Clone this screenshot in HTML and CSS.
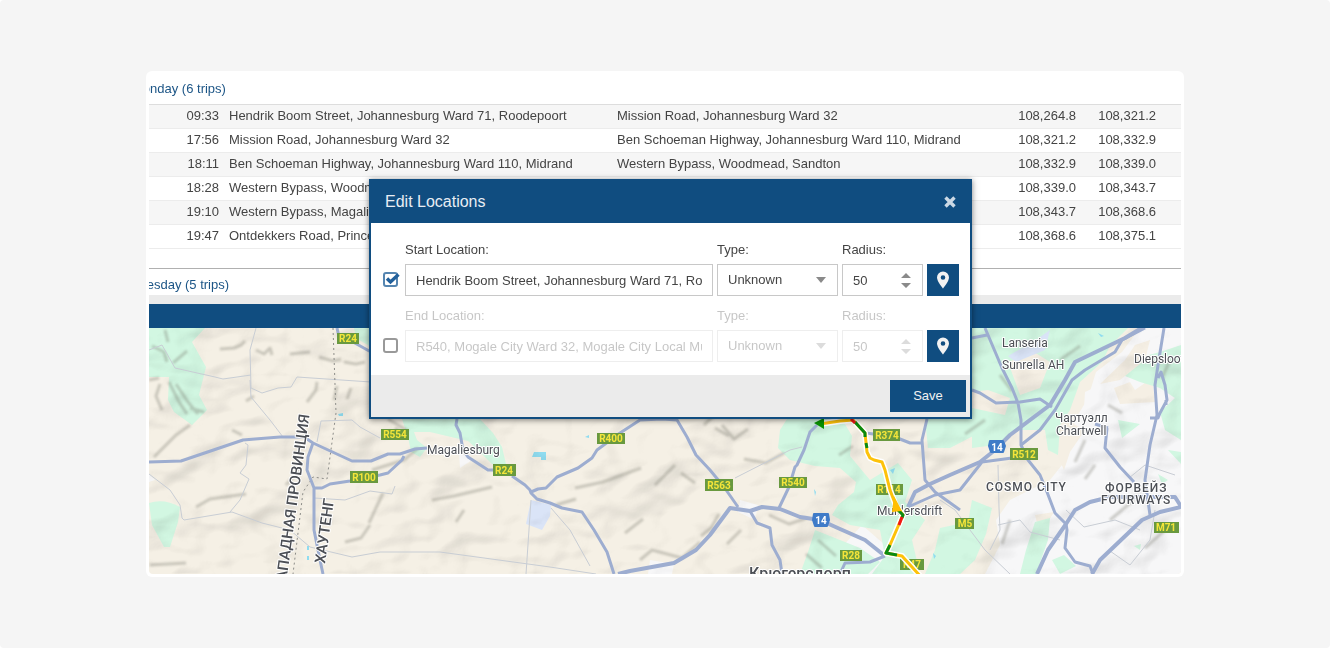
FILE: index.html
```html
<!DOCTYPE html>
<html lang="en">
<head>
<meta charset="utf-8">
<meta name="viewport" content="width=device-width, initial-scale=1">
<title>Edit Locations</title>
<link rel="stylesheet" href="styles.css">
</head>
<body>
<main class="page">
  <div class="card">
    <section class="report">
      <h2 class="day">Monday (6 trips)</h2>
      <table class="trips">
        <colgroup><col class="col-time"><col class="col-from"><col class="col-to"><col class="col-odo"><col class="col-odo"><col class="col-end"></colgroup>
        <tbody>
          <tr><td class="num">09:33</td><td>Hendrik Boom Street, Johannesburg Ward 71, Roodepoort</td><td>Mission Road, Johannesburg Ward 32</td><td class="num">108,264.8</td><td class="num">108,321.2</td><td></td></tr>
          <tr><td class="num">17:56</td><td>Mission Road, Johannesburg Ward 32</td><td>Ben Schoeman Highway, Johannesburg Ward 110, Midrand</td><td class="num">108,321.2</td><td class="num">108,332.9</td><td></td></tr>
          <tr><td class="num">18:11</td><td>Ben Schoeman Highway, Johannesburg Ward 110, Midrand</td><td>Western Bypass, Woodmead, Sandton</td><td class="num">108,332.9</td><td class="num">108,339.0</td><td></td></tr>
          <tr><td class="num">18:28</td><td>Western Bypass, Woodmead, Sandton</td><td></td><td class="num">108,339.0</td><td class="num">108,343.7</td><td></td></tr>
          <tr><td class="num">19:10</td><td>Western Bypass, Magaliessig, Sandton</td><td></td><td class="num">108,343.7</td><td class="num">108,368.6</td><td></td></tr>
          <tr><td class="num">19:47</td><td>Ontdekkers Road, Princess, Roodepoort</td><td></td><td class="num">108,368.6</td><td class="num">108,375.1</td><td></td></tr>
        </tbody>
      </table>
      <h2 class="day day-next">Tuesday (5 trips)</h2>
    </section>
    <div class="splitter"></div>
    <div class="map-bar"></div>
    <svg class="map" viewBox="149 328 1032 246" preserveAspectRatio="xMidYMid slice" role="img" aria-label="Trip map">
      <defs>
        <filter id="relief" x="0" y="0" width="100%" height="100%" color-interpolation-filters="sRGB">
          <feTurbulence type="fractalNoise" baseFrequency="0.014 0.020" numOctaves="3" seed="11"/>
          <feDiffuseLighting surfaceScale="14" diffuseConstant="1.12" lighting-color="#ffffff"><feDistantLight azimuth="225" elevation="62"/></feDiffuseLighting>
        </filter>
        <filter id="soft" x="-10%" y="-10%" width="120%" height="120%"><feGaussianBlur stdDeviation="1.2"/></filter>
      </defs>
      <rect x="149" y="328" width="1032" height="246" fill="#f5f0e5"/>
      <path class="urban" d="M1181 328H1140L1122 352L1096 372L1088 398L1075 420L1066 460L1050 480L1010 500L996 520L1000 545L985 574H1181z"/>
      <path class="urban" d="M1085 392L1098 386L1100 402L1084 408zM740 500L758 505L755 520L738 512zM862 525L885 545L880 574H800L830 560zM459 452L472 460L460 468zM650 560L674 564L672 574H648zM149 474L155 480L149 482z"/>
      <path class="sand" d="M1114 388L1130 382L1135 390L1152 378L1155 402L1120 404zM1066 420L1085 430L1070 452L1064 470L1055 450zM985 490L1000 500L990 530L975 545zM1035 515L1054 512L1040 535z"/>
      <g class="green">
        <path d="M149 328H205L192 342L206 367L199 395L207 410L192 425L174 412L168 400L169 377H149z"/>
        <path d="M149 503Q164 498 180 507L178 522L170 547H164L152 525z"/>
        <path d="M354 328H371V347L356 338z"/>
        <path d="M402 419H480L493 433L502 447L506 464H492L478 450L468 441L430 432H414L417 440L427 448L420 457L411 452L408 437z"/>
        <path d="M787 419H842L852 436L850 456L870 480L898 463L912 480L905 502L925 520L912 540L920 574H872L885 556L880 530L850 525L832 515L838 505L854 492L856 482L840 468L815 466L790 460L778 448L780 430z"/>
        <path d="M815 530L835 538L860 548L880 562L868 574H800L808 552z"/>
        <path d="M972 328H1128L1110 346L1102 362L1080 382L1070 410L1060 425L1058 455L1048 450L1045 430L1020 430L995 445L972 448z"/>
        <path d="M925 419H972L975 435L950 448L928 448z"/>
        <path d="M1130 360L1160 352L1181 345V440L1165 430L1160 412L1175 398L1160 388L1140 382L1120 374z"/>
        <path d="M940 528L968 522L972 500L992 508L986 534L975 560L960 574H925L935 550z"/>
        <path d="M1035 522L1050 518L1048 540L1036 574H1020L1026 550zM1052 560L1064 555L1076 566L1060 574zM1118 420L1140 424L1122 438zM1168 450L1181 452V464zM1158 474L1168 480L1162 484zM1134 546L1141 544L1140 550z"/>
      </g>
      <path class="sand" d="M972 392L988 390L1010 398L1005 415L972 408zM1008 362L1034 352L1050 362L1040 388L1020 395zM1100 384L1125 360L1135 345L1150 340L1145 360L1120 380z"/>
      <path d="M531 500L551 505L550 516L542 530L526 524zM1008 356L1036 340L1050 330L1045 350L1016 362z" fill="#dae4f7"/>
      <path class="water" d="M534 452H546V460H541V457H532zM585 437L589 435V438zM338 414L343 413V416L339 416zM890 470L895 468L893 474zM1098 333L1104 336L1101 337zM307 546h2v4h-2zM307 556h2v4h-2zM933 553l3 3l-2 3zM814 489l2 3l-1 4z"/>
      <rect class="relief" x="149" y="328" width="1032" height="246" filter="url(#relief)"/>
      <g class="ridges" filter="url(#soft)">
        <path d="M220 349l14-1 7-3 4-4M256 350l8 4 6-6 2 7M290 354l20-2M319 357l14 4 8-2M344 362l12 2 9-2M307 402l9-12 1-8M334 400l3-14M347 399l4-11M246 401l8-5"/>
        <path d="M152 346l12 6 3 10M165 330l3 12M173 363l14-12M149 380l10-2M169 382l10 20 8 12M176 384l12 18 10 12M190 408l14 4M160 384l-4 12 6 14"/>
        <path d="M388 419l20 12M395 428l12 9M300 470l-14 15M370 525l-9 13-16 4M383 493l-14 30M372 470l32-10 14-12M432 500l22-4 38-9M456 522l8-12M575 488l28-6 38-14M556 505l20-6M625 533l18-14M655 485l20-20M681 473l14 10M716 413l-12 12M715 428l14 8"/>
        <path d="M640 560l12-10 30 8 18-16M701 536l10-8 8-14M727 544l14-14M722 425l12 14 14-10M744 459l22 4 18-10M839 455l14-9M769 515l20 9 18-6M818 540l18 16M806 554l16 14M196 507l14-8 36-5M150 565l36-2M190 425l-14 10-22 22M232 430l10 5"/>
        <path d="M1000 375l12 16M1060 360l20-14M1085 440l-10 22M1095 465l-10 14M1110 520l24-20M1145 548l20-18M1010 520l-8 24M985 420l-20 14M1108 405l14 8M1170 360l-8 18"/>
      </g>
      <g class="minor">
        <path d="M256 328L250 350L251 388L262 393L278 388L291 387L297 377L371 382M149 350L162 345L175 368L215 377L223 379L251 375M250 380L251 397L270 420L283 437M149 474L170 490L180 505L182 518L184 520L220 514L232 512L262 523L290 530L310 547L352 557L380 552L440 552L550 567L596 574M245 443L248 445L246 465L240 473L249 479L240 500L230 512M317 442L321 421L352 420L360 427L380 438M314 498L345 500L370 491L392 494L395 486"/>
        <path d="M531 500L526 574M551 508L570 530L590 566M735 478L790 450L802 447M998 465L999 508L1000 530L990 550M998 525L1020 520L1030 532L1060 540M1066 510L1084 527L1115 520L1140 530M1110 551L1130 565L1150 540L1155 510M1129 478L1145 465L1175 475M940 500L955 510L985 550L1010 574"/>
      </g>
      <path class="border" d="M333 328L336 413L327 479L313 477L303 492L293 574"/>
      <g class="road">
        <path d="M149 462L181 461L243 440L255 439L280 437H304L313 443L352 461H371L388 454H400L415 449L427 448M404 456L402 460L388 473L380 475L350 481L330 484L322 488H314L307 470L308 457L313 443M314 488V530L320 560L323 574M337 328L339 337M353 342L371 352"/>
        <path d="M457 419L456 425L460 433L463 450L468 457L488 470H497M512 476L525 485L530 490L531 493L537 499L550 503L562 508L582 512L594 530L607 552L614 574M531 492L538 489L546 488L557 477L578 468L592 458L597 450L620 433L640 420L662 419L677 420L687 437L696 455L710 470L724 487L738 507"/>
        <path d="M750 511L757 523L770 528L772 545L780 560L782 574M779 508L789 487L795 467L797 465L804 450L810 432L817 425M885 556L870 562L845 563L840 574M866 433L895 437L910 443H922M927 419L922 440L925 480L935 492L960 510M908 507L935 495L960 490L982 462L1012 458M1021 445L1040 430L1055 410L1072 380L1085 370L1115 352L1122 340L1145 328"/>
        <path d="M985 328L1002 368L1012 388L1018 403L1021 420V445L1028 460L1040 475L1047 492L1055 513L1066 524L1067 530L1065 548L1075 562L1090 566L1093 574M972 390L980 393L996 403L1020 402L1040 399L1052 407M972 338L987 335M1164 328L1158 365L1155 385L1157 415L1150 445L1145 480L1150 515M1158 378L1161 372L1165 385L1167 400L1160 413L1158 418H1150M1107 428L1105 448L1120 467L1134 482M1108 428L1095 424M1166 400V405"/>
      </g>
      <g class="highway">
        <path d="M618 574L630 571L674 563L696 550L710 535L730 508L750 511L762 507L780 509L800 517L820 520L840 529L865 540L885 556"/>
        <path d="M908 507L915 492L930 484L950 475L980 462L995 450L1010 435L1050 405L1065 380L1075 362L1100 350L1125 338L1145 326M1037 574L1048 550L1066 524L1075 510L1090 502L1110 497L1175 497L1182 508M1092 574L1100 560L1142 520L1160 512L1181 507"/>
      </g>
      <g class="shield">
        <rect x="337" y="333" width="22" height="11"/><text x="348" y="342">R24</text>
        <rect x="381" y="429" width="28" height="11"/><text x="395" y="438">R554</text>
        <rect x="350" y="471" width="28" height="12"/><text x="364" y="481">R100</text>
        <rect x="493" y="464" width="23" height="12"/><text x="504" y="474">R24</text>
        <rect x="597" y="433" width="28" height="11"/><text x="611" y="442">R400</text>
        <rect x="705" y="479" width="28" height="12"/><text x="719" y="489">R563</text>
        <rect x="779" y="477" width="28" height="11"/><text x="793" y="486">R540</text>
        <rect x="873" y="429" width="27" height="12"/><text x="887" y="439">R374</text>
        <rect x="876" y="484" width="27" height="11"/><text x="889" y="493">R114</text>
        <rect x="840" y="550" width="22" height="11"/><text x="851" y="559">R28</text>
        <rect x="900" y="559" width="24" height="11"/><text x="912" y="568">R47</text>
        <rect x="955" y="518" width="19" height="11"/><text x="965" y="527">M5</text>
        <rect x="1010" y="448" width="28" height="12"/><text x="1024" y="458">R512</text>
        <rect x="1154" y="522" width="25" height="11"/><text x="1166" y="531">M71</text>
      </g>
      <g class="national">
        <path d="M814 514H828L829 520L827 526H815L813 520z"/><text x="821" y="524">14</text>
        <path d="M990 441H1003L1005 446L1003 452H991L989 446z"/><text x="997" y="451">14</text>
      </g>
      <g class="place">
        <text x="427" y="454">Magaliesburg</text>
        <text x="877" y="515">Muldersdrift</text>
        <text x="1002" y="347">Lanseria</text>
        <text x="1002" y="369">Sunrella AH</text>
        <text x="1134" y="363">Diepsloot</text>
        <text x="1055" y="422">Чартуэлл</text>
        <text x="1056" y="435">Chartwell</text>
        <text class="suburb" x="986" y="491">COSMO CITY</text>
        <text class="suburb" x="1105" y="492">ФОРВЕЙЗ</text>
        <text class="suburb" x="1101" y="504">FOURWAYS</text>
        <text class="city" x="749" y="579">Крюгерсдорп</text>
        <text class="province" transform="translate(285 590) rotate(-82)">ЗАПАДНАЯ ПРОВИНЦИЯ</text>
        <text class="province" transform="translate(325 564) rotate(-82)">ХАУТЕНГ</text>
      </g>
      <g class="trail">
        <path class="casing" d="M820 424L840 421L853 420L865 433L867 452L870 458L874 460L882 462L885 470L890 490L896 506L903 515L890 545L886 553L902 556L922 578"/>
        <path class="normal" d="M820 424L840 421L853 420L865 433L867 452L870 458L874 460L882 462L885 470L890 490L896 506L903 515L890 545L886 553L902 556L922 578"/>
        <path class="slow" d="M855 422L865 433L865 437M866 443L867 448M897 509L903 515L902 518M890 545L886 553L897 555"/>
        <path class="fast" d="M851 419L855 423M902 517L899 525"/>
        <path d="M814 423L824 418V429z" fill="#089200"/>
        <path d="M894 496L902 511L892 512z" fill="#ffbf00"/>
      </g>
    </svg>

    <form class="dialog" role="dialog" aria-labelledby="dialog-title">
      <header class="dialog-head">
        <h1 id="dialog-title" class="dialog-title">Edit Locations</h1>
        <button class="close" type="button" aria-label="Close"><svg viewBox="0 0 12 12" width="12" height="12"><path d="M1.500 1.500L10.500 10.500M10.500 1.500L1.500 10.500" stroke="currentColor" stroke-width="3.400"/></svg></button>
      </header>
      <div class="dialog-body">
        <div class="location">
          <span class="check"><input type="checkbox" checked aria-label="Edit start location"><svg viewBox="0 0 18 16" width="18" height="16"><path d="M4 6.500L7.500 10L15.500 2.500" fill="none" stroke="#22609b" stroke-width="3.400"/></svg></span>
          <div class="field"><label for="start">Start Location:</label><input id="start" class="control" type="text" value="Hendrik Boom Street, Johannesburg Ward 71, Roodepoort"></div>
          <div class="field"><label for="start-type">Type:</label><span class="wrap"><select id="start-type" class="control"><option>Unknown</option></select><svg class="caret" viewBox="0 0 10 6" width="10" height="6"><path d="M0 0H10L5 6z"/></svg></span></div>
          <div class="field"><label for="start-radius">Radius:</label><span class="wrap"><input id="start-radius" class="control" type="number" value="50"><svg class="spin" viewBox="0 0 10 18" width="10" height="18"><path d="M0 6L5 1L10 6zM0 11H10L5 16z"/></svg></span></div>
          <button class="pin" type="button" aria-label="Pick start on map"><svg viewBox="0 0 14 18" width="14" height="18"><path d="M7 .5A6 6 0 0 0 1 6.500C1 10.500 7 17.500 7 17.500S13 10.500 13 6.500A6 6 0 0 0 7 .5zM7 4.200a2.300 2.300 0 1 1 0 4.600a2.300 2.300 0 0 1 0-4.600z" fill="currentColor" fill-rule="evenodd"/></svg></button>
        </div>
        <div class="location">
          <span class="check"><input type="checkbox" aria-label="Edit end location"></span>
          <div class="field off"><label for="end">End Location:</label><input id="end" class="control" type="text" value="R540, Mogale City Ward 32, Mogale City Local Municipality" disabled></div>
          <div class="field off"><label for="end-type">Type:</label><span class="wrap"><select id="end-type" class="control" disabled><option>Unknown</option></select><svg class="caret" viewBox="0 0 10 6" width="10" height="6"><path d="M0 0H10L5 6z"/></svg></span></div>
          <div class="field off"><label for="end-radius">Radius:</label><span class="wrap"><input id="end-radius" class="control" type="number" value="50" disabled><svg class="spin" viewBox="0 0 10 18" width="10" height="18"><path d="M0 6L5 1L10 6zM0 11H10L5 16z"/></svg></span></div>
          <button class="pin" type="button" aria-label="Pick end on map"><svg viewBox="0 0 14 18" width="14" height="18"><path d="M7 .5A6 6 0 0 0 1 6.500C1 10.500 7 17.500 7 17.500S13 10.500 13 6.500A6 6 0 0 0 7 .5zM7 4.200a2.300 2.300 0 1 1 0 4.600a2.300 2.300 0 0 1 0-4.600z" fill="currentColor" fill-rule="evenodd"/></svg></button>
        </div>
      </div>
      <footer class="dialog-foot"><button class="save" type="submit">Save</button></footer>
    </form>
  </div>
</main>
</body>
</html>
```
FILE: styles.css
```css
* { box-sizing: border-box; }
body {
  margin: 0;
  background: #fff;
  color: #444;
  font: 13px/20px "Liberation Sans", Arial, sans-serif;
}
.page {
  min-height: 100vh;
  padding: 71px 146px;
  background: #f5f5f5;
  border-radius: 4px;
}
.card {
  position: relative;
  padding: 3px;
  background: #fff;
  border-radius: 6px;
}
.report { overflow: hidden; }
.day {
  margin: 0 0 0 -17px;
  padding: 5px 0;
  color: #1c5586;
  font-size: 13px;
  font-weight: 400;
  line-height: 20px;
}
.day-next {
  margin-top: 19px;
  padding: 6px 0 0;
  border-top: 1px solid #b0b0b0;
}
.trips {
  width: 100%;
  border-collapse: collapse;
  table-layout: fixed;
  border-top: 1px solid #ddd;
}
.trips td {
  height: 24px;
  padding: 0 0 1px;
  border-bottom: 1px solid #ececec;
  line-height: 22px;
  white-space: nowrap;
  overflow: hidden;
}
.trips tr:nth-child(odd) { background: #f6f6f6; }
.trips .num { padding-right: 10px; text-align: right; }
.col-time { width: 80px; }
.col-from { width: 388px; }
.col-odo { width: 80px; }
.col-end { width: 15px; }
.splitter { height: 9px; background: #ebebeb; }
.map-bar { height: 24px; background: #104d80; }
.map {
  display: block;
  width: 100%;
  border-radius: 0 0 4px 4px;
  font-family: Roboto, "Noto Sans", sans-serif;
}
.urban { fill: #f7f7f8; }
.sand { fill: #f5efe4; }
.green { fill: #d2f7e2; }
.water { fill: #8fdcf0; }
.relief { mix-blend-mode: multiply; opacity: 0.18; }
.ridges {
  fill: none;
  stroke: #77776c;
  stroke-width: 3;
  stroke-linejoin: round;
  opacity: 0.34;
}
.minor { fill: none; stroke: #c8cdd4; stroke-width: 1; }
.border { fill: none; stroke: #8c8c88; stroke-dasharray: 2 3; }
.road, .highway {
  fill: none;
  stroke: #9dadd0;
  stroke-width: 3;
  stroke-linejoin: round;
}
.highway { stroke-width: 4; }
.shield rect { fill: #69993f; }
.shield text, .national text {
  fill: #f4e53a;
  font-size: 10px;
  font-weight: 700;
  text-anchor: middle;
}
.national path { fill: #3f7bc8; stroke: #3f7bc8; stroke-width: 2; stroke-linejoin: round; }
.national text { fill: #fff; }
.place {
  fill: #4c4f55;
  stroke: #fff;
  stroke-width: 2px;
  stroke-linejoin: round;
  paint-order: stroke;
  font-size: 12px;
  font-weight: 400;
}
.place .suburb { font-weight: 500; letter-spacing: 1px; }
.place .city { font-size: 16px; font-weight: 500; }
.place .province { font-size: 15px; font-weight: 500; }
.trail { fill: none; stroke-width: 3; stroke-linejoin: round; }
.casing { stroke: #fff; stroke-width: 6; }
.normal { stroke: #fdc20a; }
.slow { stroke: #0a8a12; }
.fast { stroke: #f01818; }

.dialog {
  position: absolute;
  top: 108px;
  left: 223px;
  width: 603px;
  border: 2px solid #104d80;
  background: #fff;
  box-shadow: 0 1px 6px rgba(0, 0, 0, 0.5);
}
.dialog-head {
  display: flex;
  align-items: center;
  justify-content: space-between;
  height: 42px;
  padding: 0 14px;
  background: #104d80;
  color: #e8eef4;
}
.dialog-title { margin: 0; font-size: 16px; font-weight: 400; line-height: 20px; }
.dialog button {
  display: flex;
  align-items: center;
  justify-content: center;
  padding: 0;
  border: 0;
  background: #104d80;
  color: #f2f2f2;
  font: inherit;
}
.dialog .close { color: #ccd9e5; }
.dialog-body { display: grid; gap: 10px; padding: 17px 11px 13px 12px; }
.location {
  display: grid;
  grid-template-columns: 18px 1fr 121px 81px 32px;
  column-gap: 4px;
  align-items: end;
}
.field { display: grid; row-gap: 4px; min-width: 0; }
.field.off { opacity: 0.3; }
.wrap { position: relative; display: block; }
.control {
  display: block;
  width: 100%;
  height: 32px;
  margin: 0;
  padding: 0 10px;
  border: 1px solid #c8c8c8;
  border-radius: 0;
  background: #fff;
  color: #444;
  font: inherit;
  appearance: none;
}
.control:disabled { opacity: 1; }
.control[type="number"] { appearance: textfield; }
.caret, .spin { position: absolute; right: 12px; fill: #8a8a8a; pointer-events: none; }
.caret { top: 13px; }
.spin { top: 8px; }
.check { position: relative; height: 24px; }
.check input {
  display: block;
  width: 15px;
  height: 15px;
  margin: 0;
  border: 2px solid #999;
  border-radius: 3px;
  appearance: none;
}
.check input:checked { border-color: #5585b0; }
.check svg { position: absolute; top: 0; left: 0; }
.dialog .pin { width: 32px; height: 32px; }
.dialog-foot { display: flex; justify-content: flex-end; padding: 5px 4px; background: #ebebeb; }
.dialog .save { width: 76px; height: 32px; }
```
